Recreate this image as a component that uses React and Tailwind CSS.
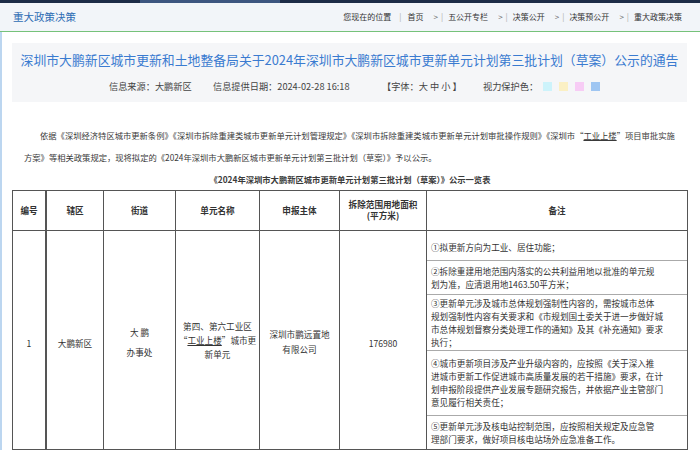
import React from "react";

const Gt = () => (
  <>
    <span className="ml-[10px] text-[#666]">&gt;</span>
    <span className="text-[#aaa] ml-[3px] mr-[5px]">|</span>
  </>
);

export default function App() {
  return (
    <div className="w-[700px] h-[450px] overflow-hidden bg-white text-[#333] font-['Noto_Sans_CJK_SC','Noto_Sans',sans-serif]">
      {/* top strip */}
      <div className="h-[3px] flex">
        <div className="w-[140px] bg-[#1d2c47]" />
        <div className="w-[140px] bg-[#3d5680]" />
        <div className="flex-1 bg-[#1d2c47]" />
      </div>
      {/* header bar */}
      <div className="h-[29px] bg-[#f2f5f9] border-b border-[#76c27a] flex items-center justify-between pl-[13px] pr-[18px]">
        <span className="text-[10.5px] leading-[14px] text-[#2d6cb4]">重大政策决策</span>
        <div className="flex items-center text-[8px] leading-[12px] text-[#333] whitespace-nowrap">
          <span>您现在的位置</span>
          <span className="text-[#aaa] ml-[8px] mr-[6px]">|</span>
          <span>首页</span>
          <Gt />
          <span>五公开专栏</span>
          <Gt />
          <span>决策公开</span>
          <Gt />
          <span>决策预公开</span>
          <Gt />
          <span>重大政策决策</span>
        </div>
      </div>

      <div className="flex">
        <div className="w-[2px] bg-[#bcd6f0] h-[418px]" />
        <div className="flex-1">
          {/* title box */}
          <div className="mt-[11px] ml-[10px] w-[675px] h-[59px] bg-[#f5f6f8]">
            <div className="pt-[8px] text-center text-[12.85px] leading-[18px] text-[#3a7bd0] whitespace-nowrap">
              深圳市大鹏新区城市更新和土地整备局关于2024年深圳市大鹏新区城市更新单元计划第三批计划（草案）公示的通告
            </div>
            <div className="mt-[11px] pl-[97px] flex items-center text-[9.2px] leading-[12px] text-[#444] whitespace-nowrap">
              <span className="w-[104px]">信息来源：大鹏新区</span>
              <span className="w-[169px]">信息提供日期：2024-02-28 16:18</span>
              <span className="w-[101px]">【字体：大 中 小 】</span>
              <span className="w-[60px]">视力保护色：</span>
              <span className="w-[9px] h-[9px] bg-[#cdf3fb]" />
              <span className="ml-[7px] w-[9px] h-[9px] bg-[#fbf0c4]" />
              <span className="ml-[7px] w-[9px] h-[9px] bg-[#f7ccf5]" />
              <span className="ml-[7px] w-[9px] h-[9px] bg-[#9fc6f2]" />
            </div>
          </div>

          {/* paragraph */}
          <div className="mt-[22px] text-[8.3px] leading-[22px] text-[#3a3a3a] whitespace-nowrap">
            <div className="pl-[38px]">
              依据《深圳经济特区城市更新条例》《深圳市拆除重建类城市更新单元计划管理规定》《深圳市拆除重建类城市更新单元计划审批操作规则》《深圳市“<span className="underline">工业上楼</span>”项目审批实施
            </div>
            <div className="pl-[22px]">
              方案》等相关政策规定，现将拟定的《2024年深圳市大鹏新区城市更新单元计划第三批计划（草案）》予以公示。
            </div>
            <div className="text-center font-bold pr-[2px]">
              《2024年深圳市大鹏新区城市更新单元计划第三批计划（草案）》公示一览表
            </div>
          </div>

          {/* table */}
          <div className="ml-[10px] w-[676px] border border-[#555] text-[8.6px] text-[#333]">
            <div className="grid grid-cols-[34px_57px_72px_84px_80px_87px_1fr] h-[40px] border-b border-[#555] font-bold">
              <div className="border-r-2 border-[#555] flex items-center justify-center">编号</div>
              <div className="border-r border-[#555] flex items-center justify-center">辖区</div>
              <div className="border-r border-[#555] flex items-center justify-center">街道</div>
              <div className="border-r border-[#555] flex items-center justify-center">单元名称</div>
              <div className="border-r border-[#555] flex items-center justify-center">申报主体</div>
              <div className="border-r border-[#555] flex flex-col items-center justify-center leading-[11px] pb-[2px]">
                <span>拆除范围用地面积</span>
                <span>(平方米)</span>
              </div>
              <div className="flex items-center justify-center">备注</div>
            </div>
            <div className="grid grid-cols-[34px_57px_72px_84px_80px_87px_1fr] h-[218px]">
              <div className="border-r-2 border-[#555] flex items-center justify-center pt-[6px]">1</div>
              <div className="border-r border-[#555] flex items-center justify-center pt-[6px]">大鹏新区</div>
              <div className="border-r border-[#555] flex flex-col items-center justify-center leading-[20px] pt-[4px]">
                <span>大 鹏</span>
                <span>办事处</span>
              </div>
              <div className="border-r border-[#555] flex flex-col items-center justify-center leading-[14px] whitespace-nowrap">
                <span>第四、第六工业区</span>
                <span>“<span className="underline">工业上楼</span>”城市更</span>
                <span>新单元</span>
              </div>
              <div className="border-r border-[#555] flex flex-col items-center justify-center leading-[15px] pt-[3px]">
                <span>深圳市鹏远置地</span>
                <span>有限公司</span>
              </div>
              <div className="border-r border-[#555] flex items-center justify-center pt-[6px]">176980</div>
              <div className="flex flex-col leading-[13px] whitespace-nowrap">
                <div className="h-[30px] border-b border-[#aaa] pl-[4px] flex items-center pt-[3px]">①拟更新方向为工业、居住功能；</div>
                <div className="h-[34px] border-b border-[#aaa] pl-[4px] flex flex-col justify-center">
                  <span>②拆除重建用地范围内落实的公共利益用地以批准的单元规</span>
                  <span>划为准，应清退用地1463.50平方米；</span>
                </div>
                <div className="h-[56px] border-b border-[#aaa] pl-[4px] flex flex-col justify-center">
                  <span>③更新单元涉及城市总体规划强制性内容的，需按城市总体</span>
                  <span>规划强制性内容有关要求和《市规划国土委关于进一步做好城</span>
                  <span>市总体规划督察分类处理工作的通知》及其《补充通知》要求</span>
                  <span>执行；</span>
                </div>
                <div className="h-[65px] border-b border-[#aaa] pl-[4px] flex flex-col justify-center">
                  <span>④城市更新项目涉及产业升级内容的，应按照《关于深入推</span>
                  <span>进城市更新工作促进城市高质量发展的若干措施》要求，在计</span>
                  <span>划申报阶段提供产业发展专题研究报告，并依据产业主管部门</span>
                  <span>意见履行相关责任；</span>
                </div>
                <div className="flex-1 pl-[4px] flex flex-col justify-center">
                  <span>⑤更新单元涉及核电站控制范围，应按照相关规定及应急管</span>
                  <span>理部门要求，做好项目核电站场外应急准备工作。</span>
                </div>
              </div>
            </div>
          </div>
        </div>
      </div>
    </div>
  );
}
